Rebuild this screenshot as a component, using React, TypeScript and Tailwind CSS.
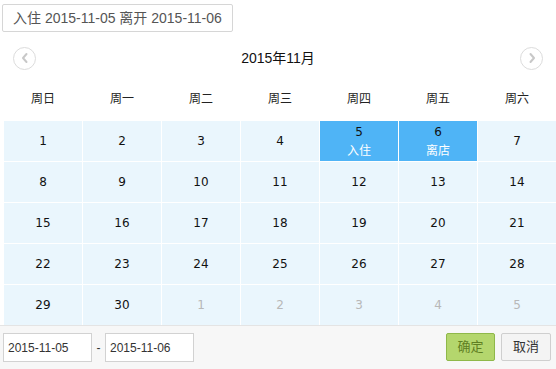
import React from 'react';

const weekdays = ['周日', '周一', '周二', '周三', '周四', '周五', '周六'];

type Day = { n: number; muted?: boolean; tag?: string };

const days: Day[] = [
  ...Array.from({ length: 30 }, (_, i) => ({ n: i + 1 } as Day)),
  ...[1, 2, 3, 4, 5].map((n) => ({ n, muted: true })),
];
days[4].tag = '入住';
days[5].tag = '离店';

const Chevron: React.FC<{ dir: 'left' | 'right' }> = ({ dir }) => (
  <div className="w-[23px] h-[23px] rounded-full border border-[#dcdcdc] flex items-center justify-center">
    <svg width="10" height="12" viewBox="0 0 10 12" fill="none">
      <path
        d={dir === 'left' ? 'M6.5 2 L3 6 L6.5 10' : 'M3.5 2 L7 6 L3.5 10'}
        stroke="#c8c8c8"
        strokeWidth="2"
        strokeLinecap="round"
        strokeLinejoin="round"
      />
    </svg>
  </div>
);

export default function App() {
  return (
    <div
      className="w-[556px] h-[369px] bg-white overflow-hidden relative flex flex-col"
      style={{ fontFamily: '"Liberation Sans", "Noto Sans CJK SC", sans-serif' }}
    >
      <div className="pt-[4px] pl-[2px]">
        <div className="w-[231px] h-[28px] border border-[#d6d6d6] rounded-[2px] flex items-center pl-[10px] text-[14px] text-[#555]">
          入住 2015-11-05 离开 2015-11-06
        </div>
      </div>

      <div className="mt-[8px]">
        <div className="h-[36px] flex items-center justify-between px-[13px]">
          <Chevron dir="left" />
          <div className="text-[14px] text-[#111]">2015年11月</div>
          <Chevron dir="right" />
        </div>

        <div className="h-[45px] pl-[4px] grid grid-cols-7 gap-x-px items-center">
          {weekdays.map((w) => (
            <div key={w} className="text-center text-[12px] text-[#222]">
              {w}
            </div>
          ))}
        </div>

        <div className="pl-[4px] grid grid-cols-7 gap-px">
          {days.map((d, i) => {
            const sel = !!d.tag;
            return (
              <div
                key={i}
                className={`h-[40px] flex flex-col items-center justify-center text-[12px] leading-[18px] ${
                  sel ? 'bg-[#4fb4f6]' : 'bg-[#eaf6fd]'
                } ${d.muted ? 'text-[#b8b8b8]' : 'text-[#111]'}`}
                style={{ fontFamily: '"DejaVu Sans", "Noto Sans CJK SC", sans-serif' }}
              >
                <span className="text-[12px]">{d.n}</span>
                {d.tag && (
                  <span
                    className="text-white text-[12px] leading-[18px]"
                    style={{ fontFamily: '"Noto Sans CJK SC", sans-serif' }}
                  >
                    {d.tag}
                  </span>
                )}
              </div>
            );
          })}
        </div>
      </div>

      <div className="flex-1 border-t border-[#e4e4e4] bg-[#f7f7f7] flex items-start pt-[7px] pl-[3px] pr-[5px]">
        <div className="w-[89px] h-[29px] bg-white border border-[#d2d2d2] flex items-center pl-[4px] text-[12px] text-[#333]">
          2015-11-05
        </div>
        <div className="w-[13px] h-[29px] flex items-center justify-center text-[12px] text-[#333]">-</div>
        <div className="w-[89px] h-[29px] bg-white border border-[#d2d2d2] flex items-center pl-[4px] text-[12px] text-[#333]">
          2015-11-06
        </div>
        <div className="ml-auto flex gap-[6px]">
          <button className="w-[49px] h-[28px] rounded-[2px] bg-[#b4d66d] border border-[#8fb84a] text-[13px] text-[#5f7f22]">
            确定
          </button>
          <button className="w-[50px] h-[28px] rounded-[2px] bg-[#f4f4f4] border border-[#cfcfcf] text-[13px] text-[#333]">
            取消
          </button>
        </div>
      </div>
    </div>
  );
}
